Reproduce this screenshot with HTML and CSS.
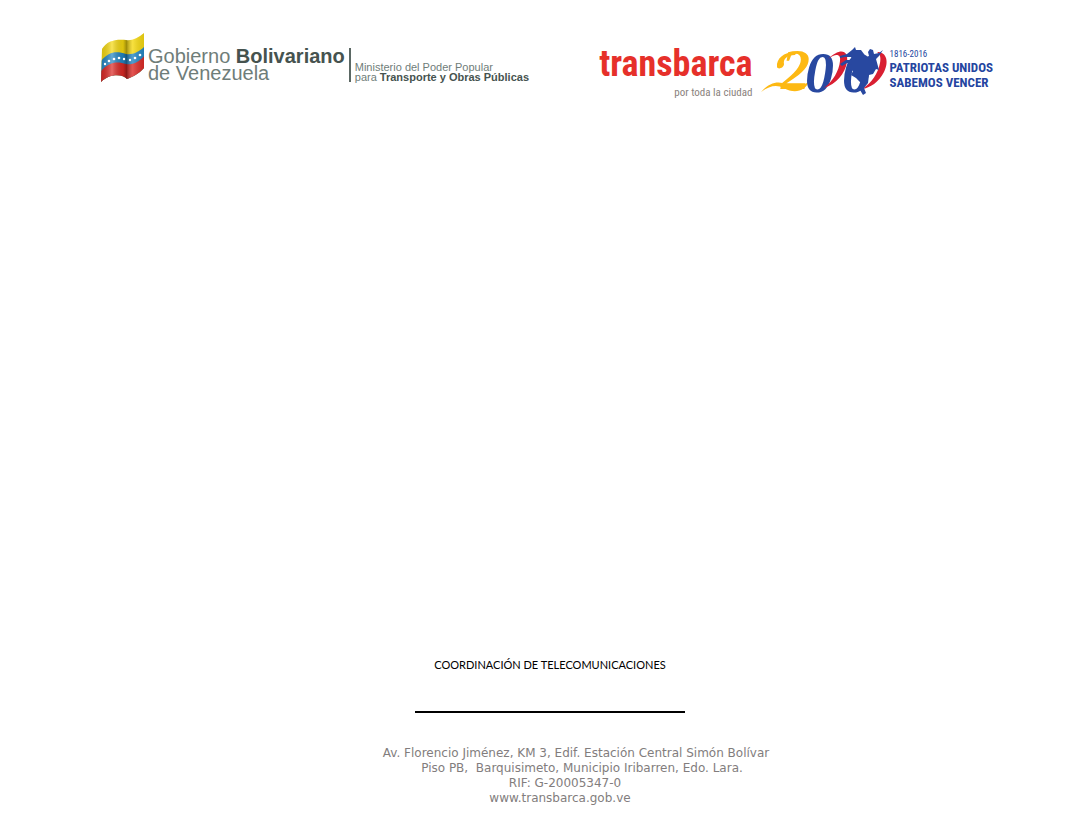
FILE: index.html
```html
<!DOCTYPE html>
<html lang="es">
<head>
<meta charset="utf-8">
<title>Transbarca</title>
<link rel="stylesheet" href="styles.css">
</head>
<body>
<div class="page">
  <header class="header">
    <div class="government">
      <svg class="flag" viewBox="0 0 44 50" aria-hidden="true">
        <defs>
          <clipPath id="flag-shape"><path d="M1 16 C6 8 14 6 25 7 C31 8 37 5 43 0 V35 C38 41 31 44 26 46 C22 41 9 40 0 49 Z"/></clipPath>
          <linearGradient id="fold"><stop offset="0" stop-color="#000" stop-opacity=".12"/><stop offset=".25" stop-color="#fff" stop-opacity=".3"/><stop offset=".5" stop-color="#000" stop-opacity=".1"/><stop offset=".58" stop-color="#000" stop-opacity=".35"/><stop offset=".72" stop-color="#fff" stop-opacity=".2"/><stop offset="1" stop-color="#000" stop-opacity=".1"/></linearGradient>
        </defs>
        <g clip-path="url(#flag-shape)">
          <path fill="#f6d90f" d="M0 0H44V50H0Z"/>
          <path fill="#2386c4" d="M0 28 C8 18 16 18 25 21 C32 22 38 19 44 13 V50 H0Z"/>
          <path fill="#dc2925" d="M0 38 C8 29 16 28 25 31 C32 32 38 29 44 22 V50 H0Z"/>
          <path fill="url(#fold)" d="M0 0H44V50H0Z"/>
        </g>
        <g fill="#fff"><circle cx="4" cy="31" r="1.2"/><circle cx="8" cy="28" r="1.3"/><circle cx="13" cy="26" r="1.3"/><circle cx="18" cy="25" r="1.3"/><circle cx="23" cy="26" r="1.2"/><circle cx="29" cy="27" r="1.2"/><circle cx="34" cy="25" r="1.3"/><circle cx="39" cy="22" r="1.3"/></g>
      </svg>
      <div class="government-name">Gobierno <b>Bolivariano</b><br>de Venezuela</div>
      <div class="ministry">Ministerio del Poder Popular<br>para <b>Transporte y Obras Públicas</b></div>
    </div>
    <div class="partners">
      <div class="transbarca">
        <div class="brand">transbarca</div>
        <div class="slogan">por toda la ciudad</div>
      </div>
      <div class="bicentennial">
        <svg class="two-hundred" viewBox="0 0 126 50" role="img" aria-label="200">
          <path fill="#fdb913" d="M0 45 C9 35 17 34 25 37 C33 41 42 41 49 33 C44 45 33 47 23 41 C15 37 8 39 0 45Z"/>
          <path fill="#fdb913" d="M16 20 C15 11 24 4 36 5 L34 8 C26 8 22 12 23 17 C23 21 17 23 16 20Z"/>
          <text class="numeral numeral-two" x="20" y="42">2</text>
          <text class="numeral numeral-zero" x="44" y="45">0</text>
          <text class="numeral numeral-zero" x="81" y="45">0</text>
          <path fill="#d91f32" d="M67 12 C78 1 88 2 86 15 C84 27 75 37 63 41 C72 34 78 24 79 14 C80 7 75 6 67 12Z"/>
          <path fill="#d91f32" d="M116 5 C126 5 128 15 123 25 C118 35 109 41 101 42 C111 36 117 26 119 16 C120 10 119 7 116 5Z"/>
          <path fill="#2848a0" d="M79 9 L86 7 91 3 94 0 95 3 100 3 103 7 105 10 108 9 107 5 109 2 112 3 113 7 118 6 122 3 118 9 115 12 118 23 115 22 112 27 108 28 107 36 103 41 105 46 102 48 99 43 100 36 95 31 90 28 92 24 87 22 91 18 86 16 81 19 79 17 85 13 92 13 90 10 84 10 79 11Z"/>
        </svg>
        <div class="motto"><span class="years">1816-2016</span><b>PATRIOTAS UNIDOS</b><b>SABEMOS VENCER</b></div>
      </div>
    </div>
  </header>
  <footer class="footer">
    <h1 class="department">COORDINACIÓN DE TELECOMUNICACIONES</h1>
    <hr class="rule">
    <address class="address">
      <span class="street">Av. Florencio Jiménez, KM 3, Edif. Estación Central Simón Bolívar</span>
      <span class="city">Piso PB,&nbsp; Barquisimeto, Municipio Iribarren, Edo. Lara.</span>
      <span class="tax">RIF: G-20005347-0</span>
      <span class="site">www.transbarca.gob.ve</span>
    </address>
  </footer>
</div>
</body>
</html>
```
FILE: styles.css
```css
body {
  margin: 0;
  background: #fff;
  font-family: "DejaVu Sans", sans-serif;
}
.page {
  box-sizing: border-box;
  min-height: 100vh;
  display: flex;
  flex-direction: column;
  justify-content: space-between;
  padding: 33px 89px 26px 101px;
}
.header, .government, .partners, .bicentennial {
  display: flex;
  align-items: flex-start;
  white-space: nowrap;
}
.header {
  justify-content: space-between;
  padding-right: 6px;
}
.government {
  color: #6f7d79;
  font-family: "Liberation Sans", Arial, sans-serif;
}
.government b { color: #46534f; }
.flag {
  width: 44px;
  height: 50px;
}
.government-name {
  margin: 15px 4px 0 3px;
  font-size: 20px;
  line-height: 17px;
}
.ministry {
  margin-top: 15px;
  padding: 14px 0 0 4px;
  border-left: 2px solid #5b6864;
  font-size: 11px;
  line-height: 10px;
}
.partners { gap: 8px; }
.transbarca {
  padding-top: 10px;
  text-align: right;
  font-family: "Roboto Condensed", "Liberation Sans Narrow", "DejaVu Sans Condensed", sans-serif;
}
.brand {
  color: #e6302a;
  font-size: 36px;
  line-height: 42px;
  font-weight: 700;
}
.slogan {
  color: #8a827d;
  font-size: 11px;
  line-height: 16px;
}
.bicentennial { padding-top: 14px; }
.two-hundred {
  width: 126px;
  height: 50px;
  overflow: visible;
}
.numeral {
  font-family: "Liberation Serif", serif;
  font-size: 58px;
  font-style: italic;
  font-weight: 700;
}
.numeral-two { fill: #fdb913; }
.numeral-zero { fill: #2848a0; }
.motto {
  display: flex;
  flex-direction: column;
  margin: 2px 0 0 3px;
  color: #2445a0;
  font-family: "Roboto Condensed", "Liberation Sans Narrow", "DejaVu Sans Condensed", sans-serif;
  font-size: 13px;
  line-height: 15px;
}
.years {
  font-size: 9px;
  line-height: 11px;
}
.footer {
  display: flex;
  flex-direction: column;
  align-items: center;
}
.department {
  margin: 0;
  font: 400 11px/16px Lato, sans-serif;
  color: #000;
}
.rule {
  width: 270px;
  height: 2px;
  margin: 38px 0 33px;
  border: 0;
  background: #000;
}
.address {
  display: flex;
  flex-direction: column;
  align-items: center;
  color: #827d7d;
  font-size: 12px;
  line-height: 15px;
  font-style: normal;
}
.street { padding-left: 52px; }
.city { padding-left: 64px; }
.tax { padding-left: 30px; }
.site { padding-left: 20px; }
```
